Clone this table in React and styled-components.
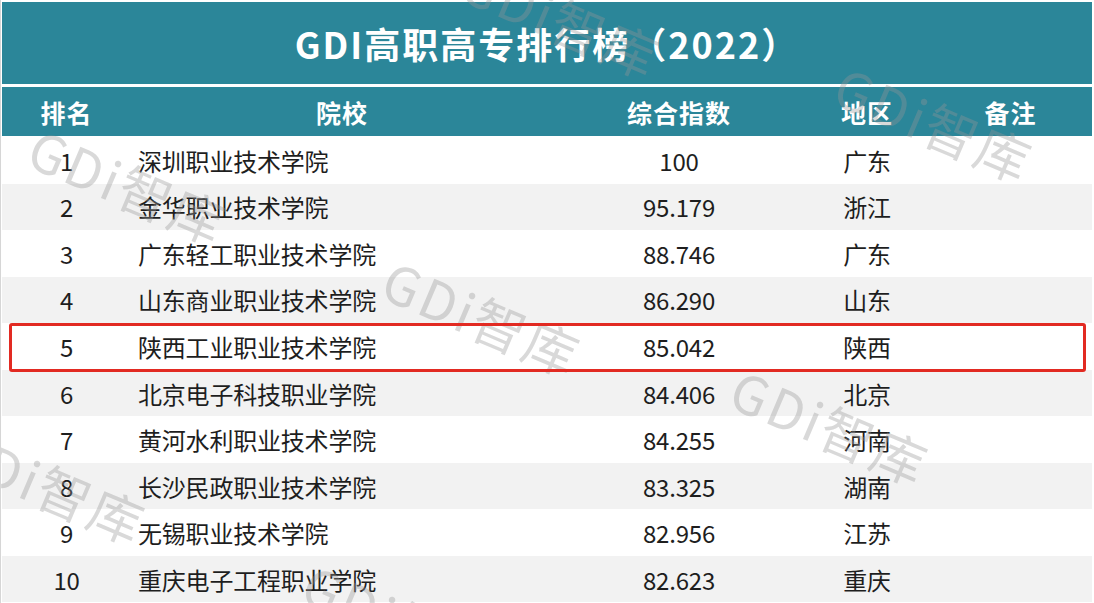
import React from "react";
import styled, { createGlobalStyle } from "styled-components";

const GlobalStyle = createGlobalStyle`
  html, body {
    margin: 0;
    padding: 0;
    background: #ffffff;
  }
  body {
    font-family: "Noto Sans CJK SC", "Noto Sans", sans-serif;
  }
`;

const TEAL = "#2b8699";

const rows = [
  { rank: 1, school: "深圳职业技术学院", score: "100", region: "广东" },
  { rank: 2, school: "金华职业技术学院", score: "95.179", region: "浙江" },
  { rank: 3, school: "广东轻工职业技术学院", score: "88.746", region: "广东" },
  { rank: 4, school: "山东商业职业技术学院", score: "86.290", region: "山东" },
  { rank: 5, school: "陕西工业职业技术学院", score: "85.042", region: "陕西", marked: true },
  { rank: 6, school: "北京电子科技职业学院", score: "84.406", region: "北京" },
  { rank: 7, school: "黄河水利职业技术学院", score: "84.255", region: "河南" },
  { rank: 8, school: "长沙民政职业技术学院", score: "83.325", region: "湖南" },
  { rank: 9, school: "无锡职业技术学院", score: "82.956", region: "江苏" },
  { rank: 10, school: "重庆电子工程职业学院", score: "82.623", region: "重庆" },
];

// watermark spots (G top-left)
const marks = [
  [46, 132],
  [400, 264],
  [748, 373],
  [-35, 432],
  [852, 70],
  [479, -34],
  [320, 568],
];

const App = () => {
  return (
    <>
      <GlobalStyle />
      <Board>
        <TitleBar>GDI高职高专排行榜（2022）</TitleBar>
        <HeadRow>
          <Cell>排名</Cell>
          <Cell>院校</Cell>
          <Cell>综合指数</Cell>
          <Cell>地区</Cell>
          <Cell>备注</Cell>
        </HeadRow>
        <Body>
          {rows.map((r) => (
            <Row key={r.rank} $odd={r.rank % 2 === 1} $marked={r.marked}>
              <Cell>{r.rank}</Cell>
              <Cell $left>{r.school}</Cell>
              <Cell>{r.score}</Cell>
              <Cell>{r.region}</Cell>
              <Cell />
            </Row>
          ))}
        </Body>
        {marks.map(([x, y], i) => (
          <Watermark key={i} style={{ left: x - 4, top: y - 12 }}>
            GDi智库
          </Watermark>
        ))}
      </Board>
    </>
  );
};
export default App;

const Board = styled.div`
  position: relative;
  width: 1094px;
  height: 603px;
  overflow: hidden;
  padding: 2px 2px 0 1px;
  box-sizing: border-box;
  border-left: 1px solid #d6d6d6;
  background: #fff;
`;

const TitleBar = styled.div`
  height: 82px;
  background: ${TEAL};
  color: #fff;
  display: flex;
  align-items: center;
  justify-content: center;
  font-size: 36px;
  font-weight: 700;
  letter-spacing: 2px;
`;

const grid = `
  display: grid;
  grid-template-columns: 129px 422px 252px 124px 1fr;
  align-items: center;
`;

const Cell = styled.div`
  text-align: ${(p) => (p.$left ? "left" : "center")};
  padding-left: ${(p) => (p.$left ? "7px" : "0")};
  white-space: nowrap;
`;

const HeadRow = styled.div`
  ${grid}
  margin-top: 3px;
  height: 49px;
  background: ${TEAL};
  color: #fff;
  font-size: 25px;
  font-weight: 700;
  letter-spacing: 1px;
`;

const Body = styled.div`
  display: grid;
  grid-auto-rows: 46.56px;
  margin-top: 1px;
`;

const Row = styled.div`
  ${grid}
  position: relative;
  background: ${(p) => (p.$odd ? "#ffffff" : "#f2f2f2")};
  color: #1e1e1e;
  font-size: 24px;
  letter-spacing: -0.2px;

  &::after {
    content: "";
    display: ${(p) => (p.$marked ? "block" : "none")};
    position: absolute;
    top: 0;
    bottom: -2px;
    left: 7px;
    right: 6px;
    border: 3px solid #e22a22;
    border-radius: 3px;
    z-index: 3;
    pointer-events: none;
  }
`;

const Watermark = styled.span`
  position: absolute;
  z-index: 2;
  transform-origin: 0 0;
  transform: rotate(23deg);
  font-size: 53px;
  line-height: 1;
  letter-spacing: 3px;
  white-space: nowrap;
  color: rgba(150, 150, 150, 0.36);
  pointer-events: none;
`;
